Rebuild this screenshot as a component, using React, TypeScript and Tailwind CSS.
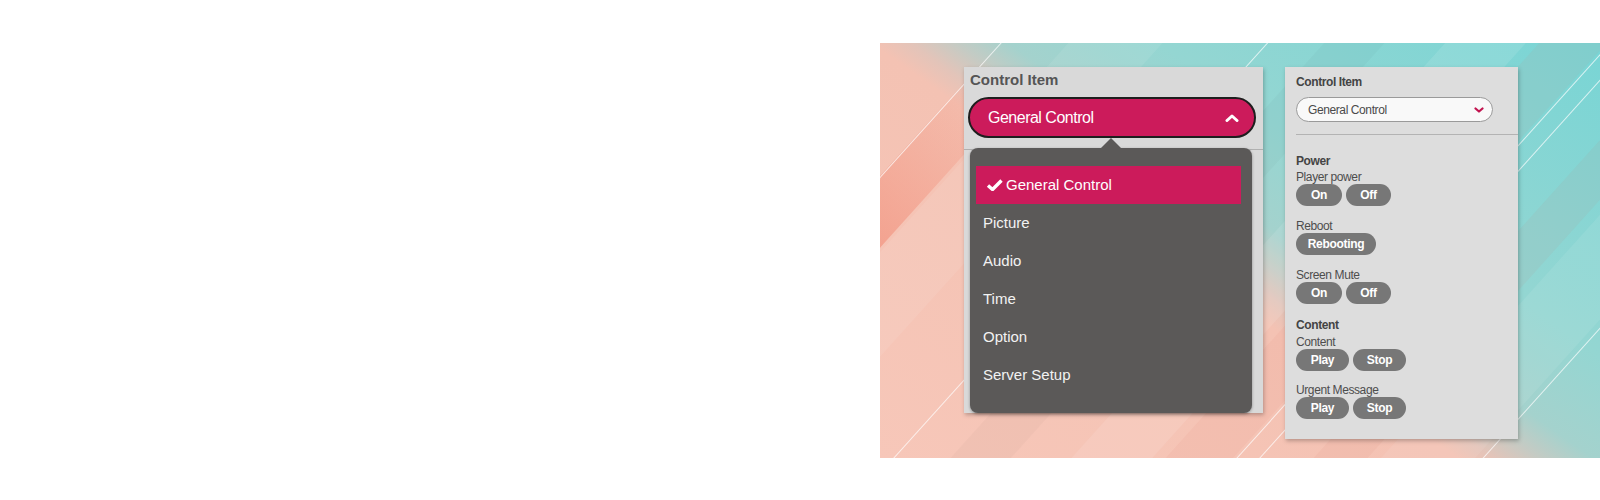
import React from 'react';

const menuItems = ['General Control', 'Picture', 'Audio', 'Time', 'Option', 'Server Setup'];

// soft stripe bands of the backdrop, offsets measured across the stripes
const bands = [
  { y: 140, h: 70, fill: '#ffffff', opacity: 0.08 },
  { y: 330, h: 45, fill: '#000000', opacity: 0.025 },
  { y: 420, h: 60, fill: '#ffffff', opacity: 0.1 },
  { y: 490, h: 50, fill: '#e9765f', opacity: 0.07 },
  { y: 600, h: 40, fill: '#d9735e', opacity: 0.07 },
  { y: 650, h: 70, fill: '#ffffff', opacity: 0.08 },
];

const lines = [90, 288, 543, 560, 726];

function Backdrop() {
  return (
    <svg className="absolute inset-0" width="720" height="415" viewBox="0 0 720 415">
      <defs>
        <linearGradient id="bg" gradientUnits="userSpaceOnUse" x1="-197" y1="277" x2="243" y2="-343">
          <stop offset="0" stopColor="#f7c7b9" />
          <stop offset="0.44" stopColor="#f4c2b3" />
          <stop offset="0.47" stopColor="#e3c4b9" />
          <stop offset="0.505" stopColor="#c4cbc4" />
          <stop offset="0.545" stopColor="#a4d2cd" />
          <stop offset="0.66" stopColor="#94d6d2" />
          <stop offset="1" stopColor="#78d5d5" />
        </linearGradient>
        <linearGradient id="salmon" gradientUnits="userSpaceOnUse" x1="-190" y1="0" x2="60" y2="0">
          <stop offset="0" stopColor="#f28f7a" stopOpacity="0.75" />
          <stop offset="1" stopColor="#f28f7a" stopOpacity="0" />
        </linearGradient>
      </defs>
      <rect width="720" height="415" fill="url(#bg)" />
      <g transform="rotate(-48)">
        <rect x="-1200" y="89" width="2400" height="48" fill="url(#salmon)" />
        {bands.map((b) => (
          <rect key={b.y} x="-1200" y={b.y} width="2400" height={b.h} fill={b.fill} opacity={b.opacity} />
        ))}
        {lines.map((s) => (
          <line key={s} x1="-1200" y1={s} x2="1200" y2={s} stroke="#ffffff" strokeWidth="1" opacity="0.7" />
        ))}
      </g>
    </svg>
  );
}

function ChevronUp() {
  return (
    <svg width="14" height="8" viewBox="0 0 14 8">
      <path d="M2 6.5 L7 2 L12 6.5" fill="none" stroke="#ffffff" strokeWidth="3" strokeLinejoin="round" strokeLinecap="round" />
    </svg>
  );
}

function ChevronDown() {
  return (
    <svg width="10" height="6" viewBox="0 0 10 6">
      <path d="M1.5 1.5 L5 4.5 L8.5 1.5" fill="none" stroke="#c2134f" strokeWidth="2.2" strokeLinecap="round" strokeLinejoin="round" />
    </svg>
  );
}

function Check() {
  return (
    <svg width="17" height="12" viewBox="0 0 17 12">
      <path d="M2 6.5 L6.5 10.5 L15.5 1.5" fill="none" stroke="#ffffff" strokeWidth="3.4" strokeLinejoin="round" />
    </svg>
  );
}

function ControlItemDropdown() {
  return (
    <div className="relative w-[299px] h-[346px] bg-[#d9d9d9] shadow-[1px_2px_4px_rgba(0,0,0,0.25)]">
      <div className="pl-[6px] pt-[4px] text-[15px] leading-[18px] font-bold text-[#555]">Control Item</div>
      <button className="ml-[4px] mt-[8px] w-[288px] h-[41px] rounded-full border-2 border-[#1e1e1e] bg-[#cc1b5b] flex items-center justify-between pl-[18px] pr-[15px] text-white text-[16px] tracking-[-0.5px]">
        <span>General Control</span>
        <ChevronUp />
      </button>
      <div className="mt-[11px] h-px bg-[#b0b0b0]" />

      <div className="absolute left-[6px] top-[81px] w-[282px] h-[265px] rounded-[8px] bg-[#5b5958] shadow-[0_1px_3px_rgba(0,0,0,0.35)]">
        <div className="absolute -top-[10px] left-[130px] w-0 h-0 border-l-[11px] border-r-[11px] border-b-[11px] border-l-transparent border-r-transparent border-b-[#5b5958]" />
        <ul className="pt-[18px] pl-[6px] pr-[11px]">
          {menuItems.map((item, i) =>
            i === 0 ? (
              <li key={item} className="h-[38px] flex items-center gap-[3px] pl-[10px] bg-[#cc1b5b] text-[15px] text-white">
                <Check />
                <span>{item}</span>
              </li>
            ) : (
              <li key={item} className="h-[38px] flex items-center pl-[7px] text-[15px] text-[#f2f2f2]">
                {item}
              </li>
            )
          )}
        </ul>
      </div>
    </div>
  );
}

function PillButton({ label, width }: { label: string; width: string }) {
  return (
    <button className={`${width} h-[22px] rounded-full bg-[#777777] text-white text-[12px] font-bold tracking-[-0.3px]`}>
      {label}
    </button>
  );
}

function ControlPanel() {
  return (
    <div className="w-[233px] h-[372px] bg-[#dddddd] shadow-[1px_2px_4px_rgba(0,0,0,0.25)] pl-[11px] pt-[8px] text-[12px] leading-[14px] text-[#4d4d4d] tracking-[-0.4px]">
      <div className="font-bold text-[#444]">Control Item</div>
      <div className="mt-[8px] w-[197px] h-[25px] rounded-full border border-[#9a9a9a] bg-[#f9f9f9] flex items-center justify-between pl-[11px] pr-[8px] text-[#4a4a4a]">
        <span>General Control</span>
        <ChevronDown />
      </div>
      <div className="mt-[12px] h-px bg-[#b3b3b3]" />

      <div className="mt-[19px] font-bold text-[#444]">Power</div>
      <div className="mt-[2px]">Player power</div>
      <div className="flex gap-[4px]">
        <PillButton label="On" width="w-[46px]" />
        <PillButton label="Off" width="w-[45px]" />
      </div>

      <div className="mt-[13px]">Reboot</div>
      <div className="flex">
        <PillButton label="Rebooting" width="w-[80px]" />
      </div>

      <div className="mt-[13px]">Screen Mute</div>
      <div className="flex gap-[4px]">
        <PillButton label="On" width="w-[46px]" />
        <PillButton label="Off" width="w-[45px]" />
      </div>

      <div className="mt-[14px] font-bold text-[#444]">Content</div>
      <div className="mt-[3px]">Content</div>
      <div className="flex gap-[4px]">
        <PillButton label="Play" width="w-[53px]" />
        <PillButton label="Stop" width="w-[53px]" />
      </div>

      <div className="mt-[12px]">Urgent Message</div>
      <div className="flex gap-[4px]">
        <PillButton label="Play" width="w-[53px]" />
        <PillButton label="Stop" width="w-[53px]" />
      </div>
    </div>
  );
}

export default function App() {
  return (
    <div className="w-[1600px] h-[500px] bg-white flex justify-end items-start pt-[43px] font-['Liberation_Sans',Arial,sans-serif]">
      <section className="relative w-[720px] h-[415px] overflow-hidden">
        <Backdrop />
        <div className="relative flex items-start gap-[22px] pl-[84px] pt-[24px]">
          <ControlItemDropdown />
          <ControlPanel />
        </div>
      </section>
    </div>
  );
}
